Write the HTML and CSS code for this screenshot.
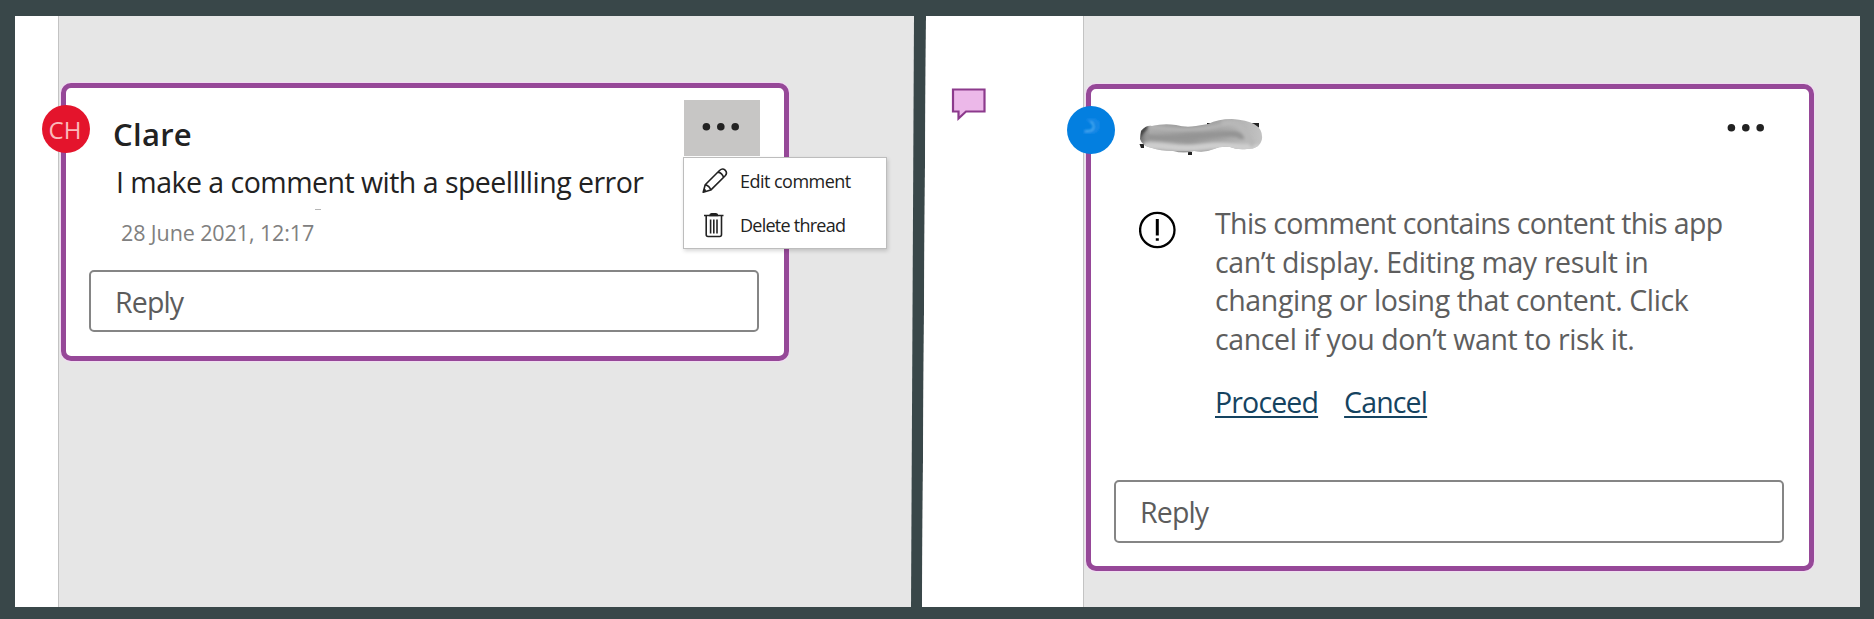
FILE: index.html
```html
<!DOCTYPE html>
<html lang="en">
<head>
<meta charset="utf-8">
<title>Comments</title>
<link rel="stylesheet" href="styles.css">
</head>
<body>
<main class="board">
  <section class="panel panel-left">
    <div class="gutter"></div>
    <div class="area">
      <article class="card card-left">
        <div class="avatar avatar-red"><span>CH</span></div>
        <header class="head">
          <h2 class="name">Clare</h2>
          <button class="more more-active" aria-label="More">
            <svg width="76" height="56" viewBox="0 0 76 56"><g fill="#222"><circle cx="22.4" cy="26.7" r="3.8"/><circle cx="36.8" cy="26.7" r="3.8"/><circle cx="51.2" cy="26.7" r="3.8"/></g></svg>
          </button>
        </header>
        <p class="comment">I make a comment with a speelllling error</p>
        <p class="date">28 June 2021, 12:17</p>
        <div class="reply">Reply</div>
        <div class="menu">
          <div class="item">
            <svg width="26" height="26" viewBox="0 0 26 26" fill="none" stroke="#222" stroke-width="1.6" stroke-linejoin="round"><path d="M1.2 24.3 3.2 16.8 17.5 2.5Q20.5-.3 23.1 2.1 25.8 4.8 23.2 7.7L8.7 22.1ZM3.2 16.8Q7.6 17.8 8.7 22.1M15.9 4.1Q17.9 4.3 19.5 5.9 21.2 7.6 21.5 9.4M1.2 24.3 3.6 21.4"/></svg>
            <span class="label-edit">Edit comment</span>
          </div>
          <div class="item">
            <svg width="26" height="26" viewBox="0 0 26 26" fill="none" stroke="#222" stroke-width="1.6"><path d="M2 3.500H21.500M4.200 3.500V22.500Q4.200 24.500 6 24.500H17.700Q19.500 24.500 19.500 22.500V3.500M8.600 7.500V21.500M11.800 7.500V21.500M15 7.500V21.500"/><path d="M8 3.500Q8 1.800 9.500 1.800H14Q15.500 1.800 15.500 3.500Z" fill="#222"/></svg>
            <span class="label-delete">Delete thread</span>
          </div>
        </div>
      </article>
      <svg class="speck" width="6" height="1"><rect width="6" height="1" fill="#b5b5b5"/></svg>
    </div>
  </section>
  <section class="panel panel-right">
    <div class="gutter">
      <svg class="bubble" width="36" height="36" viewBox="0 0 36 36"><path d="M2 2.500H33.500V24.500H15L7.500 31.500V24.500H2Z" fill="#ecb8e9" stroke="#8c3a8c" stroke-width="2.200"/></svg>
    </div>
    <div class="area">
      <article class="card card-right">
        <div class="avatar avatar-blue">
          <svg width="48" height="48" viewBox="0 0 48 48" fill="none" stroke-linecap="round">
            <filter id="haze"><feGaussianBlur stdDeviation="1"/></filter>
            <g filter="url(#haze)"><path d="M22 14Q33 14 31 21 28 28 18 26" stroke="#1588e6" stroke-width="4"/><path d="M24 16Q29 20 25 24 22 25 19 25" stroke="#4fadf0" stroke-width="1.800"/></g>
          </svg>
        </div>
        <header class="head">
          <svg class="smudge" width="126" height="40" viewBox="0 0 126 40">
            <defs>
              <linearGradient id="ink" x1="0" y1="0" x2="1" y2="0"><stop offset="0" stop-color="#666"/><stop offset=".1" stop-color="#aaa"/><stop offset=".4" stop-color="#989898"/><stop offset=".65" stop-color="#a5a5a5"/><stop offset="1" stop-color="#c4c4c4"/></linearGradient>
              <filter id="soft"><feGaussianBlur stdDeviation="1.8"/></filter>
              <clipPath id="blob"><path d="M3 12Q8 6 14 7 26 4 38 6 48 9 58 7L70 5Q80 0 94 0 109 1 116 5 125 10 124 20 122 30 109 30 99 31 92 28 82 27 76 30 67 34 56 32 46 35 35 32 22 32 14 29 4 27 2 20Z"/></clipPath>
            </defs>
            <path d="M69 4H121V8.500H69ZM50 33H54V36H50ZM1.500 25H6V29H3Z" fill="#222"/>
            <g clip-path="url(#blob)">
              <rect width="126" height="40" fill="url(#ink)"/>
              <g fill="none" filter="url(#soft)">
                <path d="M6 27Q15 26 32 28T64 28 88 27 122 29" stroke="#cecece" stroke-width="7"/>
                <path d="M12 8Q35 12 60 10T92 2" stroke="#b4b4b4" stroke-width="4"/>
                <path d="M8 18Q32 20 52 18T88 15 104 20" stroke="#949494" stroke-width="6"/>
                <path d="M84 5Q100 1 106 12T116 26" stroke="#b8b8b8" stroke-width="6"/>
                <path d="M0 18 9 7" stroke="#333" stroke-width="3"/>
              </g>
            </g>
          </svg>
          <button class="more" aria-label="More">
            <svg width="76" height="56" viewBox="0 0 76 56"><g fill="#222"><circle cx="22.4" cy="26.7" r="3.8"/><circle cx="36.8" cy="26.7" r="3.8"/><circle cx="51.2" cy="26.7" r="3.8"/></g></svg>
          </button>
        </header>
        <div class="notice">
          <svg class="alert" width="38" height="38" viewBox="0 0 38 38"><circle cx="18.300" cy="19" r="17.200" fill="none" stroke="#000" stroke-width="2.300"/><path d="M16.800 8H19.800V24.500H16.800ZM16.800 27.200H19.800V29.800H16.800Z"/></svg>
          <div>
            <p class="warning"><span class="first-line">This comment contains content this app</span><br>can’t display. Editing may result in<br>changing or losing that content. Click<br>cancel if you don’t want to risk it.</p>
            <div class="actions"><a>Proceed</a><a>Cancel</a></div>
          </div>
        </div>
        <div class="reply">Reply</div>
      </article>
    </div>
  </section>
</main>
</body>
</html>
```
FILE: styles.css
```css
* { box-sizing: border-box; }
body {
  margin: 0;
  background: #394749;
  font-family: "Open Sans", "Noto Sans", sans-serif;
  color: #222;
}
h2, p { margin: 0; }
.board {
  display: flex;
  width: 1874px;
  height: 619px;
  padding: 16px 14px 12px 15px;
  gap: 8px;
  overflow: hidden;
}
.panel { display: flex; height: 591px; background: #e6e6e6; }
.panel-left { width: 899px; clip-path: polygon(0 0, 100% 0, 896px 100%, 0 100%); }
.panel-right { width: 938px; clip-path: polygon(4px 0, 100% 0, 100% 100%, 0 100%); }
.gutter { flex: none; background: #fff; border-right: 1px solid #c3c3c3; }
.panel-left .gutter { width: 44px; }
.panel-right .gutter { width: 162px; padding: 71px 0 0 29px; }
.bubble { display: block; }
.area { position: relative; flex: 1; padding: 67px 0 0 2px; }
.panel-right .area { padding: 68px 0 0 2px; }
.card {
  position: relative;
  display: flex;
  flex-direction: column;
  width: 728px;
  padding: 12px 25px 24px 23px;
  background: #fff;
  border: 5px solid #964898;
  border-radius: 10px;
  box-shadow: 0 0 0 1px rgba(245, 215, 246, .7);
}
.card-left { height: 278px; }
.card-right { height: 487px; padding-bottom: 23px; }
.avatar {
  position: absolute;
  left: -24px;
  top: 17px;
  width: 48px;
  height: 48px;
  border-radius: 50%;
  display: flex;
  align-items: center;
  justify-content: center;
}
.avatar-red { padding: 1px 2px 0 0; background: #e4142c; color: #fbb9bb; font-size: 24px; font-weight: 500; letter-spacing: .2px; }
.avatar-blue { background: #037fe0; }
.head { display: flex; justify-content: space-between; height: 60px; }
.name { padding: 14px 0 0 24px; font-size: 31px; line-height: 40px; font-weight: 600; letter-spacing: .3px; }
.more { width: 76px; height: 56px; margin-right: -1px; padding: 0; border: 0; background: none; }
.more svg { display: block; }
.more-active { background: #c7c6c5; }
.comment { padding: 2px 0 0 27px; font-size: 28.5px; line-height: 40px; letter-spacing: -.52px; white-space: nowrap; }
.date { margin-top: 16px; padding-left: 32px; font-size: 21.5px; line-height: 30px; letter-spacing: -.1px; font-weight: 500; color: #808080; white-space: nowrap; }
.speck { position: absolute; left: 256px; top: 193px; }
.reply {
  height: 62px;
  margin-top: auto;
  padding: 1px 0 0 24px;
  border: 2px solid #858585;
  border-radius: 5px;
  font-size: 28.5px;
  line-height: 58px;
  letter-spacing: -.85px;
  color: #5c5c5c;
}
.card-right .reply { height: 63px; }
.menu {
  position: absolute;
  left: 617px;
  top: 69px;
  width: 204px;
  height: 92px;
  padding: 1px 0 0 18px;
  background: #fff;
  border: 1px solid #bdbdbd;
  box-shadow: 1px 2px 4px rgba(0, 0, 0, .16);
  font-size: 18px;
}
.item { display: flex; align-items: center; gap: 12px; height: 44px; white-space: nowrap; }
.label-edit { letter-spacing: -.53px; }
.label-delete { letter-spacing: -.75px; }
.smudge { margin: 18px 0 0 24px; }
.notice { display: flex; gap: 38px; padding: 43px 0 0 25px; }
.alert { flex: none; margin-top: 7px; }
.warning { font-size: 28.5px; line-height: 38.5px; color: #5e5e5e; letter-spacing: -.39px; white-space: nowrap; }
.first-line { letter-spacing: -.64px; }
.actions { display: flex; gap: 26px; margin-top: 24px; font-size: 28.5px; line-height: 40px; letter-spacing: -.85px; color: #154360; }
.actions a { text-decoration: underline; text-decoration-thickness: 2px; text-underline-offset: 3px; text-decoration-skip-ink: none; }
```
